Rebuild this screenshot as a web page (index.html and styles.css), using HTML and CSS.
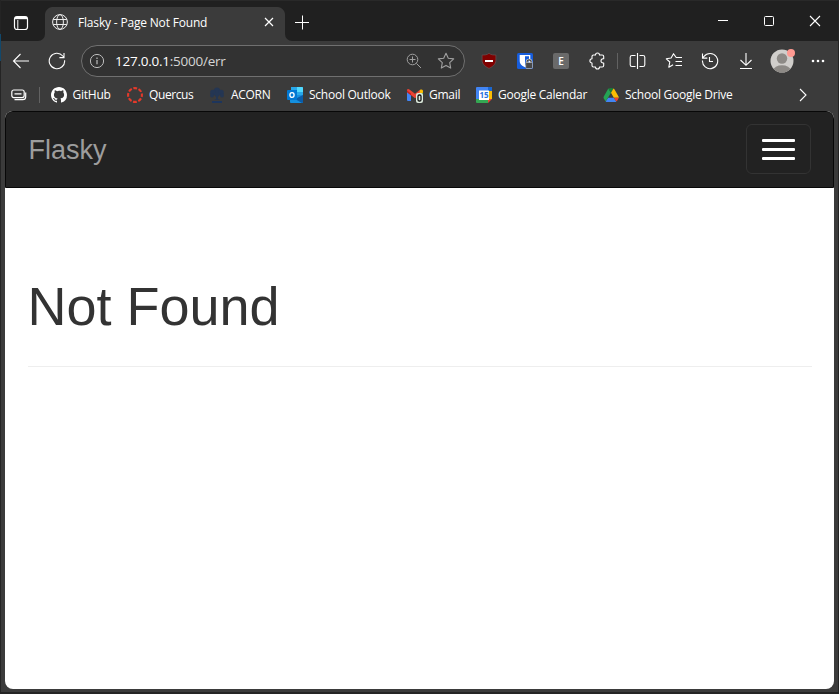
FILE: index.html
```html
<!DOCTYPE html>
<html lang="en">
<head>
<meta charset="utf-8">
<title>Flasky - Page Not Found</title>
<link rel="stylesheet" href="styles.css">
</head>
<body>
<div class="window">
  <header class="titlebar">
    <div class="workspace"><svg width="16" height="16" viewBox="0 0 16 16" fill="none" stroke="#fff"><rect x="1.5" y="1.5" width="13" height="13" rx="2.5" stroke-width="1.2"/><path d="M4.8 5v9"/><path d="M2 3h12" stroke-width="2.4"/></svg></div>
    <div class="tab">
      <svg width="16" height="16" viewBox="0 0 16 16" fill="none" stroke="#ededed"><circle cx="8" cy="8" r="7.4"/><ellipse cx="8" cy="8" rx="3.4" ry="7.4"/><path d="M1.2 5.5h13.6M1.2 10.5h13.6"/></svg>
      <span class="tab-title">Flasky - Page Not Found</span>
      <svg class="tab-close" width="10" height="10" viewBox="0 0 10 10" stroke="#fff" stroke-width="1.2"><path d="M1 1l8 8M9 1l-8 8"/></svg>
    </div>
    <div class="strip">
      <svg class="newtab" width="14" height="14" viewBox="0 0 14 14" stroke="#fff"><path d="M0 7.5h14M7.5 .5v14"/></svg>
      <div class="controls">
        <span><svg width="12" height="12" viewBox="0 0 12 12" stroke="#fff"><path d="M1 5.5h10"/></svg></span>
        <span><svg width="12" height="12" viewBox="0 0 12 12" fill="none" stroke="#fff"><rect x="1.5" y="1.5" width="9" height="9" rx="1"/></svg></span>
        <span><svg width="12" height="12" viewBox="0 0 12 12" stroke="#fff" stroke-width="1.1"><path d="M1 1l10 10M11 1L1 11"/></svg></span>
      </div>
    </div>
  </header>

  <div class="toolbar">
    <span class="cell first"><svg width="18" height="18" viewBox="0 0 18 18" fill="none" stroke="#fff" stroke-width="1.1"><path d="M17 9H1.5M8.5 2L1.5 9l7 7"/></svg></span>
    <span class="cell"><svg width="18" height="18" viewBox="0 0 18 18" fill="none" stroke="#fff" stroke-width="1.1"><path d="M16.6 8.2A7.7 7.7 0 1 1 14.8 4L16 5.3M16 1v4.6h-4.6"/></svg></span>
    <div class="address">
      <svg width="16" height="16" viewBox="0 0 16 16" fill="none" stroke="#bdbdbd"><circle cx="8" cy="8" r="6.6"/><path d="M8 7v4.2M8 4.6v1.3" stroke-width="1.2"/></svg>
      <span class="url"><b>127.0.0.1</b>:5000/err</span>
      <svg class="magnify" width="16" height="16" viewBox="0 0 16 16" fill="none" stroke="#a0a0a0"><circle cx="6.5" cy="6.5" r="5.3"/><path d="M10.4 10.4l4.6 4.6M3.5 6.5h6M6.5 3.5v6"/></svg>
      <svg width="18" height="18" viewBox="0 0 18 18" fill="none" stroke="#a0a0a0" stroke-width="1.1" stroke-linejoin="round"><path d="M9 1.3l2.3 4.9 5.4.7-4 3.7 1 5.5L9 13.4l-4.7 2.7 1-5.5-4-3.7 5.4-.7z"/></svg>
    </div>
    <span class="cell"><svg width="16" height="16" viewBox="0 0 16 16"><path d="M8 .3C6 2 3.5 2 1.1 2v5.3C1.2 11.4 4.6 13.8 8 15.4c3.4-1.6 6.8-4 6.9-8.1V2C12.5 2 10 2 8 .3z" fill="#800000" stroke="#665354" stroke-width=".7"/><path d="M4 7h8v2H4z" fill="#fff"/></svg></span>
    <span class="cell"><svg width="16" height="16" viewBox="0 0 16 16"><rect width="16" height="16" rx="1.5" fill="#175ddc"/><path d="M2.7 2h10.6v6c0 3.5-3 5-5.3 6.3C5.7 13 2.7 11.5 2.7 8z" fill="#fff"/><path d="M8 3.3h4V8c0 2.3-2 3.6-4 4.8z" fill="#175ddc"/><path d="M10 10V9a2.1 2.1 0 0 1 4.2 0v1" fill="none" stroke="#ddd" stroke-width="2.4"/><path d="M10 10V9a2.1 2.1 0 0 1 4.2 0v1" fill="none" stroke="#444" stroke-width="1.1"/><rect x="8.7" y="9.5" width="6.8" height="6" rx="1" fill="#484848" stroke="#ccc" stroke-width=".6"/></svg></span>
    <span class="cell"><i class="ext">E</i></span>
    <span class="cell"><svg width="18" height="18" viewBox="0 0 18 18" fill="none" stroke="#fff" stroke-width="1.1" stroke-linejoin="round"><path d="M5.5 3h2a2 2 0 0 1 4 0h2.7q1.5 0 1.5 1.5v2.3h-.6a2.1 2.1 0 0 0 0 4.2h.6v2.5q0 1.5-1.5 1.5h-2.7a2 2 0 0 1-4 0h-2Q4 15 4 13.5V11a2.1 2.1 0 0 1 0-4.2V4.5Q4 3 5.5 3z"/></svg></span>
    <span class="divider"></span>
    <span class="cell"><svg width="18" height="18" viewBox="0 0 18 18" fill="none" stroke="#fff" stroke-width="1.1"><path d="M8.5 1v16M6.5 3.5H3q-1.8 0-1.8 1.8v7.4q0 1.8 1.8 1.8h3.5M10.5 3.5H14q1.8 0 1.8 1.8v7.4q0 1.8-1.8 1.8h-3.5"/></svg></span>
    <span class="cell"><svg width="18" height="18" viewBox="0 0 18 18" fill="none" stroke="#fff" stroke-width="1.1" stroke-linejoin="round"><path d="M17 5.5h-5.8L8.5 1.7 6.1 6l-4.8.8L4.8 10l-1 5.2 4.3-2.4M10.5 9.5H17M10.5 13.5H17"/></svg></span>
    <span class="cell"><svg width="18" height="18" viewBox="0 0 18 18" fill="none" stroke="#fff" stroke-width="1.1"><path d="M1.5 8.5A7.6 7.6 0 1 0 3 4.5L1.6 5.8M1.5 1.5v4.6h4.8M8.5 5v4.5H12"/></svg></span>
    <span class="cell"><svg width="18" height="18" viewBox="0 0 18 18" fill="none" stroke="#fff" stroke-width="1.1"><path d="M9 1v12M3.5 8L9 13.3 14.5 8M3 16.5h12"/></svg></span>
    <span class="cell"><svg width="26" height="26" viewBox="0 0 26 26"><defs><clipPath id="face"><circle cx="13" cy="13" r="11.5"/></clipPath></defs><circle cx="13" cy="13" r="11.5" fill="#d0cecb"/><g clip-path="url(#face)" fill="#8d8a86"><circle cx="13" cy="10.5" r="5.2"/><ellipse cx="13" cy="22.3" rx="8.5" ry="5"/></g><circle cx="22" cy="5" r="4" fill="#ff9a92"/></svg></span>
    <span class="cell"><svg width="14" height="4" viewBox="0 0 14 4" fill="#fff"><circle cx="2" cy="2" r="1.3"/><circle cx="7" cy="2" r="1.3"/><circle cx="12" cy="2" r="1.3"/></svg></span>
  </div>

  <nav class="bookmarks">
    <svg width="16" height="12" viewBox="0 0 16 12" fill="none" stroke="#fff" stroke-width="1.2"><rect x=".8" y="1" width="12.4" height="7.6" rx="2"/><path d="M3.5 4.8h7M14.7 3.5v4.2q0 3-3 3H3.5"/></svg>
    <span class="divider"></span>
    <span class="mark github"><svg width="16" height="16" viewBox="0 0 16 16" fill="#fff"><path d="M8 0C3.58 0 0 3.58 0 8c0 3.54 2.29 6.53 5.47 7.59.4.07.55-.17.55-.38 0-.19-.01-.82-.01-1.49-2.01.37-2.53-.49-2.69-.94-.09-.23-.48-.94-.82-1.13-.28-.15-.68-.52-.01-.53.63-.01 1.08.58 1.23.82.72 1.21 1.87.87 2.33.66.07-.52.28-.87.51-1.07-1.78-.2-3.64-.89-3.64-3.95 0-.87.31-1.59.82-2.15-.08-.2-.36-1.02.08-2.12 0 0 .67-.21 2.2.82A7.6 7.6 0 0 1 8 3.86c.68 0 1.36.09 2 .27 1.53-1.04 2.2-.82 2.2-.82.44 1.1.16 1.92.08 2.12.51.56.82 1.27.82 2.15 0 3.07-1.87 3.75-3.65 3.95.29.25.54.73.54 1.48 0 1.07-.01 1.93-.01 2.2 0 .21.15.46.55.38A8 8 0 0 0 16 8c0-4.42-3.58-8-8-8z"/></svg>GitHub</span>
    <span class="mark quercus"><svg width="16" height="16" viewBox="0 0 16 16" fill="none" stroke="#e53a2b"><circle cx="8" cy="8" r="6.9" stroke-width="2.1" stroke-dasharray="3.8 1.619" stroke-dashoffset="1.9"/></svg>Quercus</span>
    <span class="mark acorn"><svg width="16" height="16" viewBox="0 0 16 16" fill="#1d355c"><g opacity=".75"><circle cx="8" cy="3.5" r="3"/><circle cx="4" cy="5.5" r="2.8"/><circle cx="12" cy="5.5" r="2.8"/><circle cx="3" cy="8.4" r="2"/><circle cx="13" cy="8.4" r="2"/><path d="M4 6h8l-3 4v2l2 1H5l2-1v-2z"/></g><path d="M3 14h10v2H3z"/></svg>ACORN</span>
    <span class="mark outlook"><svg width="16" height="16" viewBox="0 0 16 16"><path d="M4 0h11q1 0 1 1v7H4z" fill="#28a8ea"/><path d="M10 0h5q1 0 1 1v4h-6z" fill="#50d9ff"/><path d="M4 3h6v6H4z" fill="#0364b8"/><path d="M3 8h13v7q0 1-1 1H4q-1 0-1-1z" fill="#1490df"/><path d="M16 8v7q0 1-1 1L8 12z" fill="#0a5ca8"/><rect y="3" width="10" height="10" rx="1" fill="#0078d4"/><ellipse cx="5" cy="8" rx="2.1" ry="2.4" fill="none" stroke="#fff" stroke-width="1.3"/></svg>School Outlook</span>
    <span class="mark gmail"><svg width="17" height="16" viewBox="0 0 17 16"><path d="M0 5l4 3v6H1q-1 0-1-1z" fill="#4285f4"/><path d="M12 8l4-3v8q0 1-1 1h-3z" fill="#34a853"/><path d="M12 4l1.5-1.4Q16 1.8 16 4v1.5L12 8.4z" fill="#fbbc04"/><path d="M0 5V3.5Q0 1.5 2.4 2.4L8 6.7l5-4L12 8.4 8 11.3z" fill="#ea4335"/><path d="M0 5V3.5l4 3v2z" fill="#c5221f"/><rect x="9" y="6" width="7" height="10" rx="2" fill="#dce9dc"/><rect x="11" y="8" width="3" height="6" rx="1.3" fill="none" stroke="#111" stroke-width="1.3"/></svg>Gmail</span>
    <span class="mark calendar"><svg width="16" height="16" viewBox="0 0 16 16"><path d="M1 0h14q1 0 1 1v3H0V1q0-1 1-1z" fill="#4285f4"/><path d="M0 4h4v8H0z" fill="#4285f4"/><path d="M12 4h4v8h-4z" fill="#fbbc04"/><path d="M0 12h12v4H1q-1 0-1-1z" fill="#34a853"/><path d="M12 12h4l-4 4z" fill="#ea4335"/><path d="M12 0h3q1 0 1 1v3h-4z" fill="#1967d2"/><path d="M3 3.5h10V13H3z" fill="#fff"/><text class="date" x="8" y="11.3">15</text></svg>Google Calendar</span>
    <span class="mark drive"><svg width="16" height="16" viewBox="0 0 16 16"><path d="M5.3 1.5L.8 9.4q-.6 1 0 2L2.7 14.5 8 5.8z" fill="#24a354"/><path d="M5.3 1.5Q8 .5 10.5 1.5L8 5.8z" fill="#188038"/><path d="M10.5 1.5q.8.4 1.2 1.2l3.8 6.7q.4.8.3 1.4h-5L8 5.8z" fill="#fbbc04"/><path d="M5.2 10.8L2.7 14.5q.7.5 1.5.5h7.6q.9 0 1.5-.5l-2.5-3.7z" fill="#4285f4"/><path d="M10.8 10.8h5q-.8 2.5-2.5 3.7z" fill="#ea4335"/></svg>School Google Drive</span>
    <svg class="more" width="8" height="14" viewBox="0 0 8 14" fill="none" stroke="#fff" stroke-width="1.1"><path d="M1 1l6 6-6 6"/></svg>
  </nav>

  <main class="page">
    <div class="navbar">
      <span class="brand">Flasky</span>
      <div class="toggle"><i></i><i></i><i></i></div>
    </div>
    <div class="content"><h1>Not Found</h1></div>
  </main>
</div>
</body>
</html>
```
FILE: styles.css
```css
* { box-sizing: border-box; }
body { margin: 0; background: linear-gradient(#12486b, #12486b) 0 34px / 1px 27px no-repeat, #242424; font-family: "Open Sans", "Noto Sans", sans-serif; color: #fff; overflow: hidden; }
svg { display: block; flex: none; }
.window { height: 692px; margin: 0 1px 2px; display: flex; flex-direction: column; background: #3b3b3b; }
.titlebar { height: 41px; display: flex; background: #3b3b3b; border-top: 1px solid #292929; }
.workspace { width: 44px; padding: 14px 0 0 12px; background: #202020; border-bottom-right-radius: 7px; }
.tab { width: 240px; display: flex; align-items: center; padding: 0 11px 5px 7px; background: radial-gradient(circle at 8px 8px, #3b3b3b 7.5px, #202020 8.5px) 0 0 / 8px 8px no-repeat, radial-gradient(circle at 0 8px, #3b3b3b 7.5px, #202020 8.5px) 100% 0 / 8px 8px no-repeat, #3b3b3b; border-top: 6px solid #202020; background-clip: border-box; background-origin: padding-box; font-size: 12px; }
.tab-title { margin: 1px 0 0 10px; letter-spacing: -0.18px; white-space: nowrap; }
.tab-close { margin-left: auto; }
.strip { flex: 1; display: flex; background: #202020; border-bottom-left-radius: 7px; }
.newtab { margin: 14px 0 0 10px; overflow: visible; }
.controls { margin-left: auto; display: flex; height: 40px; }
.controls span { width: 46px; display: grid; place-items: center; }

.toolbar { height: 40px; display: flex; align-items: center; }
.cell { width: 36px; flex: none; display: grid; place-items: center; }
.first { margin-left: 2px; }
.address { width: 384px; height: 32px; margin: 0 6px; padding: 0 9px 0 7px; display: flex; align-items: center; border: 1px solid #707070; border-radius: 16px; background: #323232; font-size: 13.5px; color: #d5d5d5; }
.url { margin-left: 10px; letter-spacing: -0.24px; }
.url b { font-weight: 400; color: #fff; }
.magnify { margin: 0 15px 0 auto; }
.ext { width: 16px; height: 16px; border-radius: 2px; background: #6a6a6a; font: 600 10px/16px "Open Sans", sans-serif; text-align: center; }
.divider { width: 1px; height: 16px; margin: 0 2px; background: #626262; }

.bookmarks { height: 29px; padding: 0 0 1px 10px; display: flex; align-items: center; font-size: 12px; }
.bookmarks .divider { margin: 0 11px 0 12px; }
.mark { display: flex; align-items: center; gap: 6px; height: 16px; line-height: 14px; white-space: nowrap; letter-spacing: -0.25px; }
.github { width: 76px; gap: 5.5px; }
.quercus { width: 82px; letter-spacing: -0.4px; }
.acorn { width: 78px; letter-spacing: -0.3px; }
.outlook { width: 120px; }
.gmail { width: 69px; gap: 5px; }
.calendar { width: 127px; }
.date { font: 700 8px "Open Sans", sans-serif; fill: #2871df; text-anchor: middle; letter-spacing: 0; }
.more { margin: 0 31px 0 auto; }

.page { flex: 1; margin: 1px 4px 3px; border-radius: 8px; background: #fff; overflow: hidden; font-family: "Liberation Sans", Arial, sans-serif; }
.navbar { height: 77px; padding: 0 22px 1px 22.5px; display: flex; align-items: center; justify-content: space-between; background: #222; border: 1px solid #080808; border-radius: 7px 7px 0 0; }
.brand { padding-top: 2px; font-size: 27px; line-height: 30px; color: #9d9d9d; }
.toggle { width: 65px; height: 50px; padding: 0 15px; display: flex; flex-direction: column; justify-content: center; gap: 6px; border: 1px solid #333; border-radius: 6px; }
.toggle i { height: 3px; border-radius: 1px; background: #fff; }
.content { padding: 89px 22px 0 23px; }
h1 { margin: 0; padding-bottom: 30px; border-bottom: 1px solid #eee; color: #333; font-size: 54px; line-height: 59px; font-weight: 400; text-indent: -0.5px; }
```
